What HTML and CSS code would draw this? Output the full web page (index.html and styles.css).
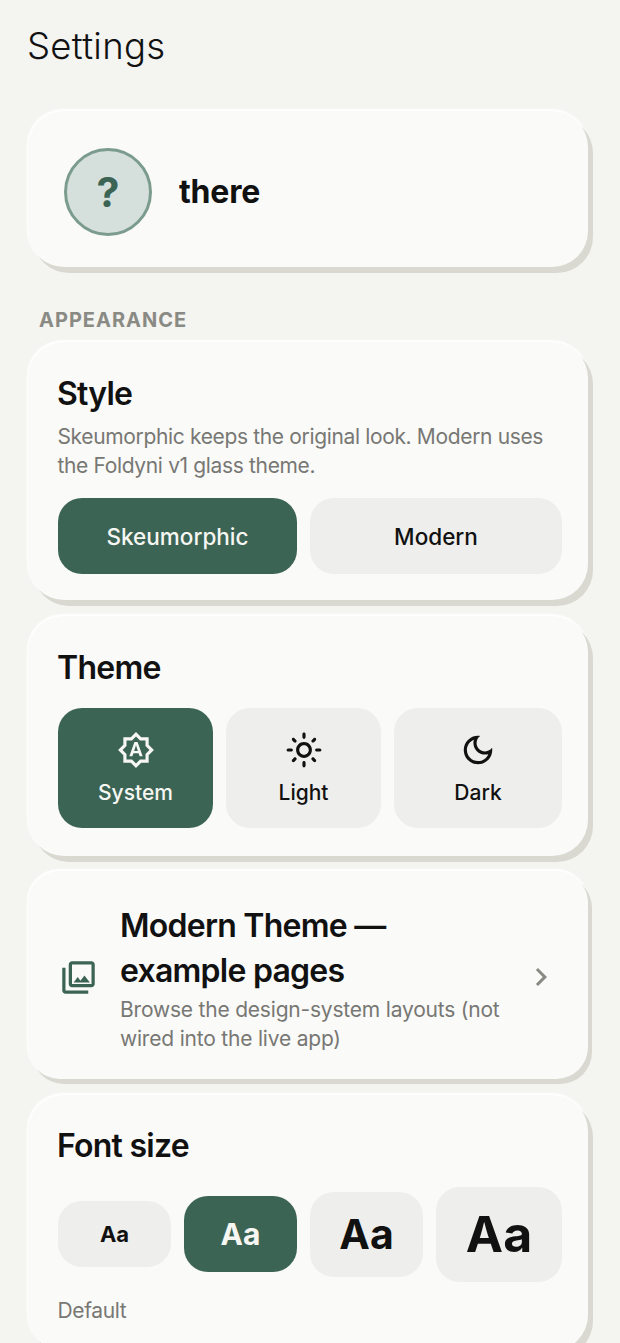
FILE: index.html
```html
<!DOCTYPE html>
<html lang="en">
<head>
<meta charset="utf-8">
<title>Settings</title>
<link rel="stylesheet" href="styles.css">
</head>
<body>
<main class="page">
  <h1 class="page-title">Settings</h1>
  <section class="card profile">
    <div class="avatar">?</div>
    <div class="profile-name">there</div>
  </section>
  <h2 class="section-label">APPEARANCE</h2>
  <div class="stack">
    <section class="card panel style-panel">
      <h3 class="card-title">Style</h3>
      <p class="card-desc">Skeumorphic keeps the original look. Modern uses the Foldyni v1 glass theme.</p>
      <div class="style-row">
        <button class="opt opt-active">Skeumorphic</button>
        <button class="opt">Modern</button>
      </div>
    </section>
    <section class="card panel theme-panel">
      <h3 class="card-title">Theme</h3>
      <div class="theme-row">
        <button class="opt opt-active theme-opt">
          <svg class="theme-icon" viewBox="0 0 24 24"><path d="M11 7l-3.2 9h1.9l.7-2h3.2l.7 2h1.9L13 7h-2zm-.15 5.65L12 9l1.15 3.65h-2.3zM20 8.69V4h-4.69L12 .69 8.69 4H4v4.69L.69 12 4 15.31V20h4.69L12 23.31 15.31 20H20v-4.69L23.31 12 20 8.69zm-2 5.79V18h-3.52L12 20.48 9.52 18H6v-3.52L3.52 12 6 9.52V6h3.52L12 3.52 14.48 6H18v3.52L20.48 12 18 14.48z"/></svg>
          <span>System</span>
        </button>
        <button class="opt theme-opt">
          <svg class="theme-icon" viewBox="0 0 24 24"><path d="M12 9c1.65 0 3 1.35 3 3s-1.35 3-3 3-3-1.35-3-3 1.35-3 3-3m0-2c-2.76 0-5 2.24-5 5s2.24 5 5 5 5-2.24 5-5-2.24-5-5-5zM2 13h2c.55 0 1-.45 1-1s-.45-1-1-1H2c-.55 0-1 .45-1 1s.45 1 1 1zm18 0h2c.55 0 1-.45 1-1s-.45-1-1-1h-2c-.55 0-1 .45-1 1s.45 1 1 1zM11 2v2c0 .55.45 1 1 1s1-.45 1-1V2c0-.55-.45-1-1-1s-1 .45-1 1zm0 18v2c0 .55.45 1 1 1s1-.45 1-1v-2c0-.55-.45-1-1-1s-1 .45-1 1zM5.99 4.58c-.39-.39-1.03-.39-1.41 0-.39.39-.39 1.03 0 1.41l1.06 1.06c.39.39 1.03.39 1.41 0s.39-1.03 0-1.41L5.99 4.58zm12.37 12.37c-.39-.39-1.03-.39-1.41 0-.39.39-.39 1.03 0 1.41l1.06 1.06c.39.39 1.03.39 1.41 0 .39-.39.39-1.03 0-1.41l-1.06-1.06zm1.06-10.96c.39-.39.39-1.03 0-1.41-.39-.39-1.03-.39-1.41 0l-1.06 1.06c-.39.39-.39 1.03 0 1.41s1.03.39 1.41 0l1.06-1.06zM7.05 18.36c.39-.39.39-1.03 0-1.41-.39-.39-1.03-.39-1.41 0l-1.06 1.06c-.39.39-.39 1.03 0 1.41s1.03.39 1.41 0l1.06-1.06z"/></svg>
          <span>Light</span>
        </button>
        <button class="opt theme-opt">
          <svg class="theme-icon" viewBox="0 0 24 24"><path d="M9.37 5.51c-.18.64-.27 1.31-.27 1.99 0 4.08 3.32 7.4 7.4 7.4.68 0 1.35-.09 1.99-.27C17.45 17.19 14.93 19 12 19c-3.86 0-7-3.14-7-7 0-2.93 1.81-5.45 4.37-6.49zM12 3c-4.97 0-9 4.03-9 9s4.03 9 9 9 9-4.03 9-9c0-.46-.04-.92-.1-1.36-.98 1.37-2.58 2.26-4.4 2.26-2.98 0-5.4-2.42-5.4-5.4 0-1.81.89-3.42 2.26-4.4-.44-.06-.9-.1-1.36-.1z"/></svg>
          <span>Dark</span>
        </button>
      </div>
    </section>
    <section class="card link-panel">
      <svg class="link-icon" viewBox="0 0 24 24"><path d="M20 4v12H8V4h12m0-2H8c-1.1 0-2 .9-2 2v12c0 1.1.9 2 2 2h12c1.1 0 2-.9 2-2V4c0-1.1-.9-2-2-2zm-8.5 9.67l1.69 2.26 2.48-3.1L19 15H9zM2 6v14c0 1.1.9 2 2 2h14v-2H4V6H2z"/></svg>
      <div class="link-text">
        <h3 class="card-title link-title">Modern Theme — example pages</h3>
        <p class="card-desc link-desc">Browse the design-system layouts (not wired into the live app)</p>
      </div>
      <svg class="link-chevron" viewBox="0 0 24 24"><path d="M10 6 8.59 7.41 13.17 12l-4.58 4.59L10 18l6-6z"/></svg>
    </section>
    <section class="card panel font-panel">
      <h3 class="card-title">Font size</h3>
      <div class="font-row">
        <button class="opt font-opt font-s">Aa</button>
        <button class="opt opt-active font-opt font-m">Aa</button>
        <button class="opt font-opt font-l">Aa</button>
        <button class="opt font-opt font-xl">Aa</button>
      </div>
      <p class="card-desc font-note">Default</p>
    </section>
  </div>
</main>
</body>
</html>
```
FILE: styles.css
```css
* { box-sizing: border-box; }
html, body { margin: 0; height: 1343px; overflow: hidden; }
body {
  background: #f4f4f0;
  color: #111;
  font-family: "Inter", "Liberation Sans", sans-serif;
}
.page { padding: 22px 32px 0 28px; }
.page-title {
  margin: 0 0 40px -1px;
  height: 49px;
  font-size: 36.5px;
  line-height: 49px;
  font-weight: 300;
  letter-spacing: 0.3px;
}
.card {
  background: #fafaf8;
  border-radius: 36px;
  box-shadow: 5px 6px 0 #d9d9d1, -0.5px -1.5px 2px #ffffff;
}
.profile {
  display: flex;
  align-items: center;
  gap: 27px;
  height: 156px;
  padding: 5px 0 0 36px;
}
.avatar {
  width: 88px;
  height: 88px;
  border-radius: 50%;
  border: 3px solid #7b9b8f;
  background: #d5e0dc;
  color: #3c6455;
  display: flex;
  align-items: center;
  justify-content: center;
  font-size: 41px;
  font-weight: 700;
}
.profile-name {
  font-size: 32px;
  font-weight: 700;
  letter-spacing: -0.2px;
}
.section-label {
  margin: 41px 0 10px 11px;
  font-size: 20px;
  line-height: 24px;
  font-weight: 700;
  letter-spacing: 1px;
  color: #8a8a84;
}
.stack { display: flex; flex-direction: column; gap: 15.5px; }
.panel { padding: 30px 26px 26px 30px; }
.card-title {
  margin: 0 0 0 -1px;
  font-size: 32px;
  line-height: 44px;
  font-weight: 600;
  letter-spacing: -0.75px;
}
.card-desc {
  margin: 0 0 0 -0.5px;
  font-size: 21px;
  line-height: 29px;
  font-weight: 400;
  letter-spacing: -0.35px;
  color: #777774;
}
.link-desc { letter-spacing: -0.2px; margin-left: 0; }
.opt {
  border: 0;
  padding: 0;
  background: #eeeeec;
  color: #111;
  font: inherit;
  font-size: 22.5px;
  font-weight: 500;
  border-radius: 24px;
}
.opt-active { background: #3c6455; color: #f6f6f2; font-weight: 550; font-size: 22.5px; }
.style-panel .card-desc { margin-top: 6px; }
.style-row {
  display: grid;
  grid-template-columns: 239fr 252fr;
  gap: 13px;
  margin-top: 18px;
}
.style-row .opt { height: 76px; }
.theme-panel { padding-bottom: 28px; }
.theme-row {
  display: grid;
  grid-template-columns: 155fr 155fr 168fr;
  gap: 13px;
  margin-top: 18px;
}
.theme-opt {
  height: 120px;
  display: flex;
  flex-direction: column;
  align-items: center;
  justify-content: center;
  gap: 11px;
  font-size: 21px;
  font-weight: 500;
}
.theme-icon { width: 38px; height: 38px; fill: currentColor; }
.link-panel {
  display: flex;
  align-items: center;
  height: 208px;
  padding: 4px 0 0 31px;
  border-radius: 32px;
  box-shadow: 4px 5px 0 #d9d9d1, -0.5px -1.5px 2px #ffffff;
}
.link-icon { width: 39px; height: 39px; flex: none; fill: #3c6455; }
.link-text { width: 384px; margin-left: 22px; margin-top: 2px; }
.link-title { line-height: 45px; margin: 0 0 2px; }
.link-chevron { width: 36px; height: 36px; flex: none; margin-left: 19px; fill: #8a8a84; }
.font-panel { padding-top: 29px; }
.font-row {
  display: grid;
  grid-template-columns: 113fr 113fr 113fr 126fr;
  gap: 13px;
  align-items: center;
  margin-top: 19px;
}
.font-opt { font-weight: 700; }
.font-s { height: 66px; font-size: 22px; }
.font-m { height: 76px; font-size: 30px; }
.font-l { height: 85px; font-size: 41px; }
.font-xl { height: 95px; font-size: 50px; }
.font-note { margin-top: 14px; }
```
